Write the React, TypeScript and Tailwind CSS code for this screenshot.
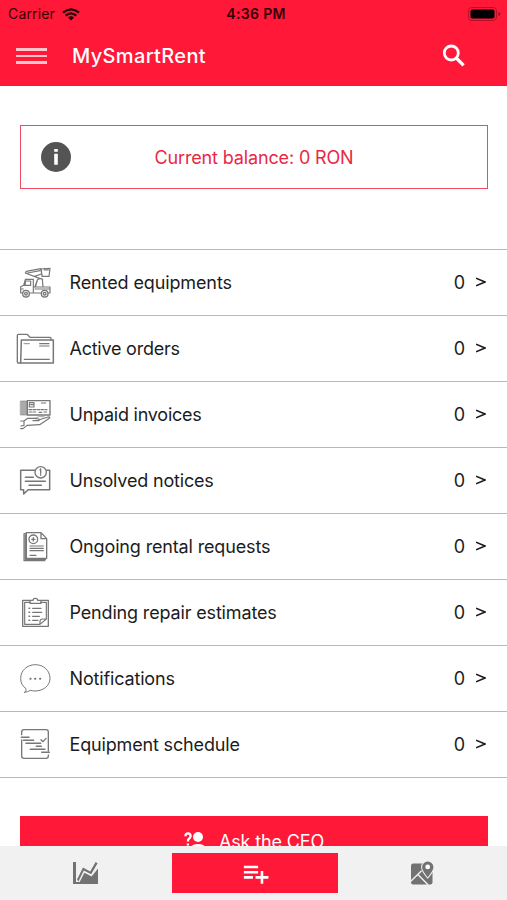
import type { ReactNode } from "react";
import { MdPlaylistAdd } from "react-icons/md";

interface MenuItem {
  label: string;
  count: number;
  icon: ReactNode;
  tracking: string;
}

function RowIcon({ children }: { children: ReactNode }) {
  return (
    <svg
      viewBox="42 36 132 120"
      className="w-11 h-10 shrink-0 text-[#777]"
      fill="none"
      stroke="currentColor"
      strokeWidth={4}
      strokeLinecap="round"
      strokeLinejoin="round"
    >
      {children}
    </svg>
  );
}

const TruckIcon = () => (
  <RowIcon>
    <path d="M122 54l28-2-3 24h-20zM124 56l2 20M133 52v5h12" strokeWidth={3.5} />
    <path d="M122 53l-43 8-3 5 44 17M83 66l37-7M104 76l20-7M120 82l-8 5-7 20M127 84l2 23M112 87l-5 19M120 82l8 3" strokeWidth={3.5} />
    <path d="M68 126h-6v-19l9-4 5-18h24v41H89M77 90h15v13H75zM71 103h14M100 108h50v18h-5M123 126H89M105 114h43M62 114h8" strokeWidth={3.5} />
    <circle cx="78" cy="128" r="10" />
    <circle cx="78" cy="128" r="4" />
    <circle cx="134" cy="128" r="10" />
    <circle cx="134" cy="128" r="4" />
  </RowIcon>
);

const FolderIcon = () => (
  <RowIcon>
    <path d="M62 138h-8q-2 0-2-3V55q0-3 3-3h26l9 9h60q3 0 3 4v4" />
    <path d="M64 69h96v69H62z" strokeWidth={4.5} />
    <path d="M72 80h16" strokeWidth={2.5} />
    <path d="M119 80h28M119 87h28" strokeWidth={3.5} />
    <path d="M73 127h75" />
  </RowIcon>
);

const InvoiceIcon = () => (
  <RowIcon>
    <path d="M62 54h20v42H62z" fill="#aaa" stroke="#888" strokeWidth={2} />
    <path d="M82 53h68v43H82z" />
    <path d="M88 59h14v13H88zM92 65h7M124 60h13" strokeWidth={3.5} />
    <path d="M87 80h54M87 87h22M117 88h9M132 87h8" strokeWidth={3.5} strokeDasharray="8 4" />
    <path d="M62 114h10l11-8h20l13 2q6 1 0 5H99M116 111l28-9q6-1 5 3l-30 20-38 2-12 10h-7M72 115v12l-9 2" strokeWidth={3.5} />
    <path d="M103 106l15-5h14" strokeWidth={2} />
  </RowIcon>
);

const NoticeIcon = () => (
  <RowIcon>
    <path d="M105 64H62v58h9v13l14-13h64V64h-9" strokeWidth={4.5} />
    <circle cx="122" cy="70" r="17" />
    <path d="M122 60v13M122 77v2M120 63l2-3" strokeWidth={4} />
    <path d="M76 85h24M76 97h60M87 109h37" strokeWidth={4.5} />
  </RowIcon>
);

const RequestIcon = () => (
  <RowIcon>
    <path d="M80 53h43l17 18v59H79V53zM123 53v18h17" />
    <path d="M79 56h-7v81h63M76 60v73h61" strokeWidth={3.5} />
    <circle cx="100" cy="73" r="13" />
    <path d="M95 73h10M100 68v10" strokeWidth={4} />
    <path d="M90 93h40M90 100h40M90 107h40M90 121h18" strokeWidth={3.5} />
  </RowIcon>
);

const ClipboardIcon = () => (
  <RowIcon>
    <path d="M89 58H68v78h77V58h-21" />
    <path d="M91 64H74v66h46l19-16V64h-17M120 130v-9q0-7 8-7h11" strokeWidth={3.5} />
    <path d="M90 67v-9h9q0-6 7-6t7 6h10v9z" />
    <path d="M98 82h25M98 94h27M98 106h20M98 118h16" />
    <path d="M87 82h2M87 94h2M87 106h2M87 118h2" strokeWidth={4.5} />
  </RowIcon>
);

const ChatIcon = () => (
  <RowIcon>
    <path d="M74 136q6-5 4-11-16-11-16-31c0-23 19-41 44-41s44 18 44 41-21 38-45 38q-7 0-14-2-8 5-17 6z" strokeWidth={3} />
    <path d="M91 95h1M105 95h1M120 95h1" strokeWidth={6} />
  </RowIcon>
);

const ScheduleIcon = () => (
  <RowIcon>
    <path d="M65 65v-8q0-7 7-7h66q7 0 7 7v57M145 126v3q0 7-7 7H72q-7 0-7-7V81" />
    <path d="M64 73h23M70 82h31M78 91h44M109 100h15M91 109h44M125 118h23" strokeWidth={4.5} />
    <path d="M123 80l6 6 9-10" />
  </RowIcon>
);

const menuItems: MenuItem[] = [
  { label: "Rented equipments", count: 0, icon: <TruckIcon />, tracking: "tracking-[-0.12px]" },
  { label: "Active orders", count: 0, icon: <FolderIcon />, tracking: "tracking-[-0.24px]" },
  { label: "Unpaid invoices", count: 0, icon: <InvoiceIcon />, tracking: "tracking-[-0.24px]" },
  { label: "Unsolved notices", count: 0, icon: <NoticeIcon />, tracking: "tracking-[-0.18px]" },
  { label: "Ongoing rental requests", count: 0, icon: <RequestIcon />, tracking: "tracking-[-0.15px]" },
  { label: "Pending repair estimates", count: 0, icon: <ClipboardIcon />, tracking: "tracking-[-0.16px]" },
  { label: "Notifications", count: 0, icon: <ChatIcon />, tracking: "tracking-[-0.16px]" },
  { label: "Equipment schedule", count: 0, icon: <ScheduleIcon />, tracking: "tracking-[-0.16px]" },
];

function StatusBar() {
  return (
    <div className="grid grid-cols-3 items-center h-7 pl-2 pr-[6px] text-[#350006]">
      <div className="flex items-center gap-[7px]">
        <span className="text-[14px] leading-none tracking-[0.15px]">Carrier</span>
        <svg viewBox="0 0 18 13" className="w-[18px] h-[13px]" fill="none" stroke="#220004" strokeWidth={2.2}>
          <path d="M1 4.6Q9-2 17 4.6M3.7 7.6Q9 3 14.3 7.6" />
          <path d="M9 12.6L5.9 9.4Q9 6.9 12.1 9.4z" fill="#220004" stroke="none" />
        </svg>
      </div>
      <span className="pl-[3px] text-[14px] font-semibold leading-none tracking-[0.35px] text-center whitespace-nowrap">
        4:36 PM
      </span>
      <svg viewBox="0 0 33 14" className="w-[33px] h-[14px] justify-self-end" fill="none">
        <rect x="0.5" y="0.5" width="28" height="13" rx="3.5" stroke="#b80f28" />
        <rect x="2.5" y="2.5" width="24" height="9" rx="2" fill="#000" />
        <path d="M30.5 5v4q2-1 2-2t-2-2z" fill="#9a0b1e" />
      </svg>
    </div>
  );
}

function Header() {
  return (
    <header className="h-[86px] shrink-0 bg-[#ff1837]">
      <StatusBar />
      <div className="flex items-center h-14 pl-4 pr-[41px]">
        <button className="flex flex-col gap-1 w-[31px]" aria-label="Menu">
          <span className="h-[2.5px] w-full bg-[#ffc4cc]" />
          <span className="h-[2.5px] w-full bg-[#ffc4cc]" />
          <span className="h-[2.5px] w-full bg-[#ffc4cc]" />
        </button>
        <h1 className="ml-[25px] flex-1 text-xl font-medium tracking-[0.35px] text-white">MySmartRent</h1>
        <svg viewBox="0 0 24 24" className="w-6 h-6" fill="none" stroke="#fff" strokeWidth={2.8}>
          <circle cx="9.3" cy="9" r="7" />
          <path d="M14.3 14l7.3 7.3" strokeWidth={3.2} />
        </svg>
      </div>
    </header>
  );
}

function BalanceCard() {
  return (
    <div className="ml-5 mr-[19px] mt-[39px] flex items-center h-16 shrink-0 border-[1.5px] border-[#ee4a60] pl-5">
      <svg viewBox="0 0 30 30" className="w-[30px] h-[30px] shrink-0">
        <circle cx="15" cy="15" r="15" fill="#545454" />
        <path d="M13.2 7h3.6v2.7h-3.6zM13.2 11.7h3.6v11h-3.6z" fill="#fff" />
      </svg>
      <span className="flex-1 pt-0.5 pr-[50px] text-center text-lg tracking-[-0.14px] text-[#e92844]">
        Current balance: 0 RON
      </span>
    </div>
  );
}

function TabBar() {
  return (
    <nav className="flex h-[54px] shrink-0 bg-[#f1f1f1] py-[7px] px-0.5">
      <button className="w-[170px] flex items-center justify-center pr-[3px]" aria-label="Statistics">
        <svg viewBox="0 0 26 24" className="w-[26px] h-6 mb-px" fill="#727272">
          <path d="M0 1h3v20h22v2H0z" />
          <path d="M4 18.6L10 6.5l7.2 3.9L22.6 1l2 1.2-6.4 11-7.4-3.8-5.4 11z" />
          <path d="M6.4 21.5L11.4 11.7l7.2 3.7L25 7.6V22z" />
        </svg>
      </button>
      <button className="w-[166px] h-10 flex items-center justify-center bg-[#ff1837]" aria-label="Add">
        <MdPlaylistAdd size={31} className="text-white" />
      </button>
      <button className="flex-1 flex items-center justify-center" aria-label="Map">
        <svg viewBox="0 0 24 24" className="w-6 h-6 mb-px" fill="#727272">
          <rect x="1" y="2.5" width="21.5" height="21" rx="2.2" />
          <path d="M0.5 20.5L11.6 9.8M7.6 13.2L18 23.8" stroke="#f1f1f1" strokeWidth={1.4} fill="none" />
          <path
            d="M17.7.6a5.6 5.6 0 0 0-5.6 5.7c0 3.6 5.6 10 5.6 10s5.7-6.4 5.7-10A5.6 5.6 0 0 0 17.7.6z"
            stroke="#f1f1f1"
            strokeWidth={2}
            paintOrder="stroke"
          />
          <circle cx="17.7" cy="5.9" r="2.4" fill="#fff" />
        </svg>
      </button>
    </nav>
  );
}

export default function App() {
  return (
    <div className="flex flex-col w-[507px] h-[900px] overflow-hidden bg-white font-['Inter',sans-serif]">
      <Header />
      <main className="flex flex-1 flex-col min-h-0 overflow-hidden">
        <BalanceCard />
        <ul className="mt-[60px] shrink-0 border-t border-[#b8b8b8]">
          {menuItems.map((item) => (
            <li
              key={item.label}
              className="flex items-center h-[66px] border-b border-[#b8b8b8] pl-3.5"
            >
              {item.icon}
              <span className={`ml-[11.5px] flex-1 text-lg text-[#1c1c1c] ${item.tracking}`}>
                {item.label}
              </span>
              <span className="text-lg text-[#1c1c1c]">{item.count}</span>
              <svg viewBox="0 0 10 10" className="w-2.5 h-2.5 mb-px ml-[11px] mr-[21px]" fill="none" stroke="#1c1c1c" strokeWidth={1.6}>
                <path d="M0 1.2l9 3.8-9 3.8" />
              </svg>
            </li>
          ))}
        </ul>
        <button className="ml-5 mr-[19px] mt-[38px] flex h-[52px] shrink-0 items-center justify-center gap-[13px] bg-[#ff1837] text-lg tracking-[-0.14px] text-white">
          <svg viewBox="0 0 22 22" className="w-[22px] h-[22px]" fill="none">
            <path d="M1.4 5.2Q1.4 2.4 4 2.4t2.6 2.7Q6.6 7 4.8 8q-.9.6-.9 2.4M3.9 12.4v2.2" stroke="#fff" strokeWidth={2.3} />
            <circle cx="14" cy="6" r="5" fill="#fff" />
            <path d="M6.5 18q0-5 7.5-5t7.5 5v2h-15z" fill="#fff" />
          </svg>
          Ask the CEO
        </button>
      </main>
      <TabBar />
    </div>
  );
}
